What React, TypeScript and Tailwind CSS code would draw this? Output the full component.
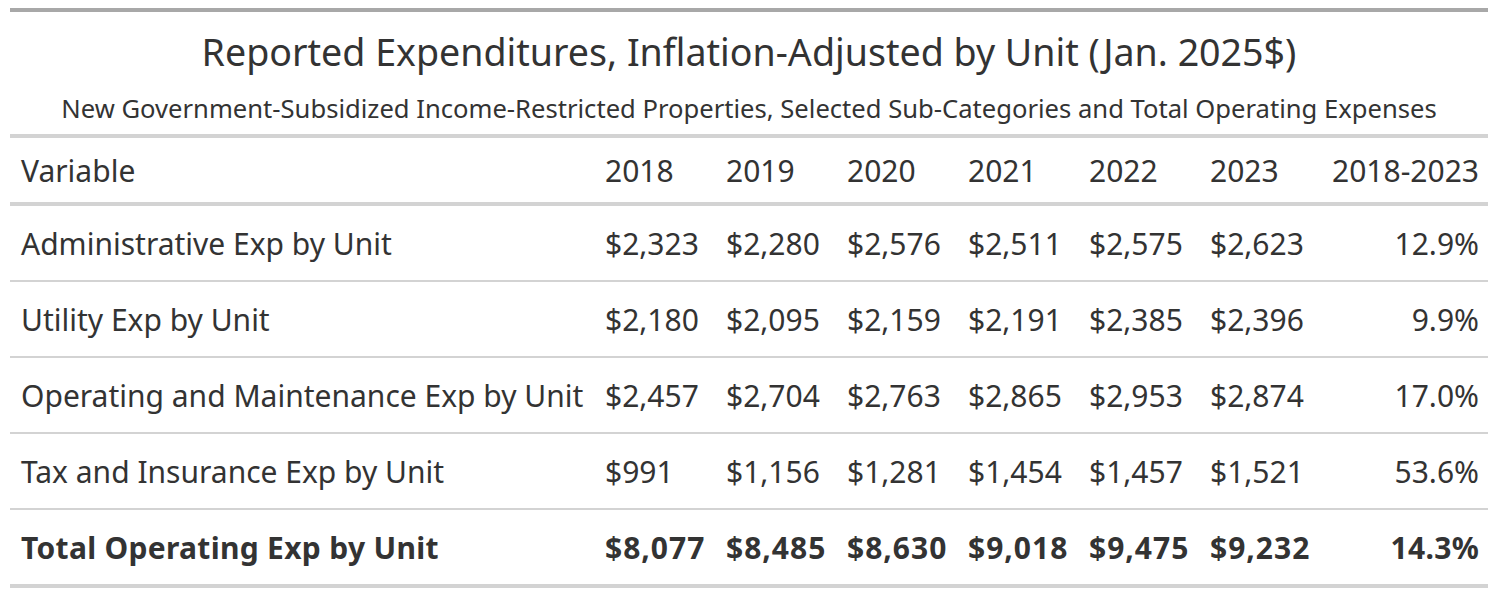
const years = ["2018", "2019", "2020", "2021", "2022", "2023"];

const rows = [
  { label: "Administrative Exp by Unit", values: ["$2,323", "$2,280", "$2,576", "$2,511", "$2,575", "$2,623"], change: "12.9%" },
  { label: "Utility Exp by Unit", values: ["$2,180", "$2,095", "$2,159", "$2,191", "$2,385", "$2,396"], change: "9.9%" },
  { label: "Operating and Maintenance Exp by Unit", values: ["$2,457", "$2,704", "$2,763", "$2,865", "$2,953", "$2,874"], change: "17.0%" },
  { label: "Tax and Insurance Exp by Unit", values: ["$991", "$1,156", "$1,281", "$1,454", "$1,457", "$1,521"], change: "53.6%" },
];

const total = { label: "Total Operating Exp by Unit", values: ["$8,077", "$8,485", "$8,630", "$9,018", "$9,475", "$9,232"], change: "14.3%" };

const grid = "grid grid-cols-[584px_repeat(6,121px)_170px] items-center";

function Row({ label, values, change, bold, last }: { label: string; values: string[]; change: string; bold?: boolean; last?: boolean }) {
  return (
    <div className={`${grid} border-[#d3d3d3] ${bold ? "font-bold tracking-[0.3px]" : ""} ${last ? "h-[78px] border-b-4" : "h-[76px] border-b-2"}`}>
      <div className="pl-[11px] whitespace-nowrap">{label}</div>
      {values.map((v, i) => (
        <div key={i} className={`pl-[11px] whitespace-nowrap ${bold ? "tracking-[1px]" : ""}`}>{v}</div>
      ))}
      <div className="pr-[11px] text-right">{change}</div>
    </div>
  );
}

export default function App() {
  return (
    <div className="bg-white w-[1498px] h-[596px] pt-2 px-[10px] text-[#333333] [font-family:'Noto_Sans',sans-serif]">
      <div className="border-t-4 border-[#a8a8a8]">
        {/* Heading */}
        <div className="h-[126px] border-b-4 border-[#d3d3d3] flex flex-col items-center">
          <h1 className="mt-[16px] text-[37.6px] leading-[48px] whitespace-nowrap">Reported Expenditures, Inflation-Adjusted by Unit (Jan. 2025$)</h1>
          <p className="mt-[17px] text-[25.6px] leading-[32px] whitespace-nowrap">New Government-Subsidized Income-Restricted Properties, Selected Sub-Categories and Total Operating Expenses</p>
        </div>

        {/* Column labels */}
        <div className={`${grid} h-[68px] border-b-4 border-[#d3d3d3] text-[30px]`}>
          <div className="pl-[11px]">Variable</div>
          {years.map((y) => (
            <div key={y} className="pl-[11px]">{y}</div>
          ))}
          <div className="pr-[11px] text-right">2018-2023</div>
        </div>

        <div className="text-[30px]">
          {rows.map((r) => (
            <Row key={r.label} {...r} />
          ))}
          <Row {...total} bold last />
        </div>
      </div>
    </div>
  );
}
